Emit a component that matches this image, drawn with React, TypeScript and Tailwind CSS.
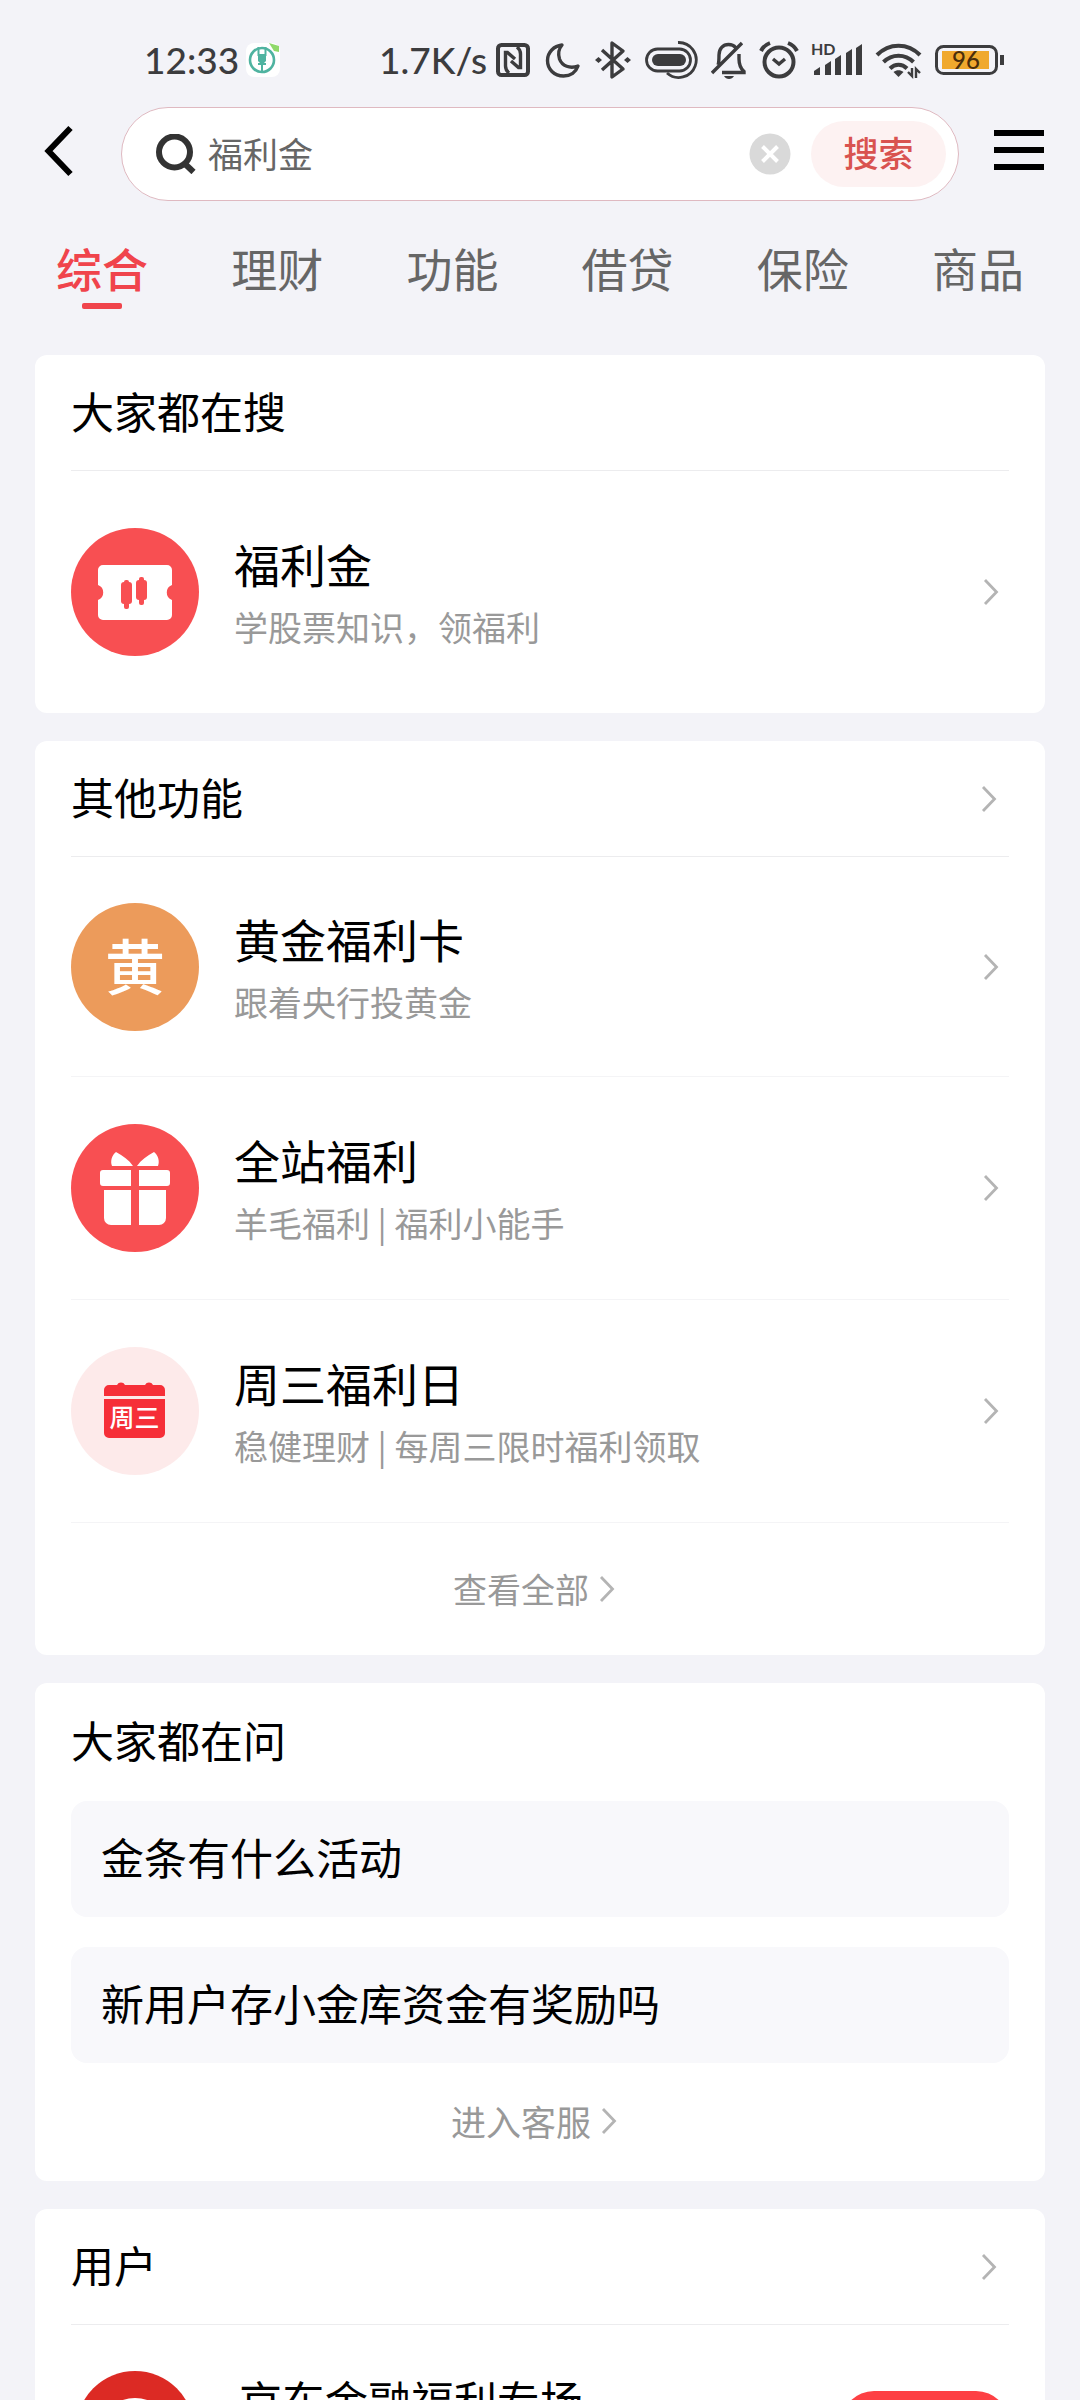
import React, { useState } from 'react';

const TABS = ['综合', '理财', '功能', '借贷', '保险', '商品'];

const QUESTIONS = ['金条有什么活动', '新用户存小金库资金有奖励吗'];

function ChevronRight() {
  return (
    <svg className="h-7 w-4 shrink-0" viewBox="0 0 16 28" fill="none" stroke="#b4b4b4" strokeWidth="2.8" aria-hidden="true">
      <path d="M2 2l11.500 12L2 26" />
    </svg>
  );
}

function StatusBar() {
  return (
    <div className="flex h-20 items-end justify-between pl-36 pr-[75px] font-['Lato',sans-serif] text-[37px] font-medium leading-10 text-[#3c3c3e]">
      <div className="flex items-center gap-[6px]">
        <span>12:33</span>
        <svg className="h-9 w-9" viewBox="0 0 36 36" fill="none" aria-hidden="true">
          <rect x="1" y="1" width="34" height="34" rx="8" fill="#fff" />
          <circle cx="17" cy="18" r="12" stroke="#4fb3a0" strokeWidth="2.600" />
          <path d="M13.500 5v8h7V5" stroke="#4fb3a0" strokeWidth="2" />
          <path d="M13 13h8v6l-2 2h2v2h-3v7h-2v-7h-3v-2h2l-2-2z" fill="#4fb3a0" />
          <path d="M24 1l10 3v6l-5-1z" fill="#8fd96a" />
        </svg>
      </div>
      <div className="flex items-center">
        <span>1.7K/s</span>
        {/* NFC */}
        <svg className="ml-2 h-9 w-9" viewBox="0 0 36 36" fill="none" stroke="#3c3c3e" aria-hidden="true">
          <rect x="3" y="3" width="30" height="30" rx="3.500" strokeWidth="4" />
          <path d="M14 31c-2.500-2-3.500-4-3.500-7V10.500h2L20 17M22 5c2.500 2 3.500 4 3.500 7v13.500h-2L16 19" strokeWidth="3.400" />
        </svg>
        {/* Do not disturb */}
        <svg className="ml-[14px] h-9 w-9" viewBox="0 0 36 36" fill="none" stroke="#3c3c3e" strokeWidth="3.400" strokeLinejoin="round" aria-hidden="true">
          <path d="M17 3C9 4 2.500 10 2.500 18.500S9 34 18.500 34c7 0 12.500-4 14.500-10-8 3-16 0-18.500-7C12.800 11.500 14 6.500 17 3z" />
        </svg>
        {/* Bluetooth */}
        <svg className="ml-[14px] h-10 w-9" viewBox="0 0 36 40" fill="none" stroke="#3c3c3e" strokeWidth="3.400" strokeLinejoin="round" aria-hidden="true">
          <path d="M7 10l21 19-11 8V3l11 8L7 30" />
          <path d="M0 20l3.500-3L7 20l-3.500 3zM29 20l3.500-3 3.500 3-3.500 3z" fill="#3c3c3e" stroke="none" />
        </svg>
        {/* Capsule */}
        <svg className="ml-[14px] h-10 w-[54px]" viewBox="0 0 54 40" fill="none" stroke="#3c3c3e" strokeWidth="2.800" aria-hidden="true">
          <rect x="1.500" y="9" width="44" height="22" rx="11" />
          <rect x="7" y="14" width="34" height="12" rx="6" fill="#3c3c3e" stroke="none" />
          <path d="M33 2.500A17.500 17.500 0 1 1 22 33" />
        </svg>
        {/* Muted bell */}
        <svg className="ml-3 h-10 w-9" viewBox="0 0 36 40" fill="none" stroke="#3c3c3e" strokeWidth="3.400" aria-hidden="true">
          <path d="M1 33L31 3M7 25c1-2 1-5 1-10C8 8.500 12 4.500 17.500 4.500c3 0 5.500 1 7 3M28 14v5c0 6 1 9 5 12.500v1H11" />
          <path d="M13 36h10c-1 2-3 3-5 3s-4-1-5-3z" fill="#3c3c3e" stroke="none" />
        </svg>
        {/* Alarm */}
        <svg className="ml-3 h-10 w-10" viewBox="0 0 40 40" fill="none" stroke="#3c3c3e" strokeWidth="4" aria-hidden="true">
          <circle cx="20" cy="22" r="14.500" />
          <path d="M14 19l6 5 6-5" strokeWidth="3.400" />
          <path d="M2 11c2-4 5-6.500 9-8M38 11c-2-4-5-6.500-9-8" />
        </svg>
        {/* Signal */}
        <svg className="ml-3 h-10 w-[52px]" viewBox="0 0 52 40" fill="#3c3c3e" aria-hidden="true">
          <text x="0" y="15" fontSize="16" fontWeight="700">HD</text>
          <path d="M3 35v-4l6-4v8zM14 35V25l6-4v14zM24 35V19l6-4v20zM35 35V13l6-4v26zM45 35V8l6-4v31z" />
        </svg>
        {/* Wi-Fi */}
        <svg className="ml-3 h-10 w-12" viewBox="0 0 48 40" fill="none" stroke="#3c3c3e" strokeWidth="4" aria-hidden="true">
          <path d="M2 15C14 2.500 33 2.500 45 15M8.500 22c8.500-8.500 21.500-8.500 30 0M15 28.500c5-5 12-5 17 0" />
          <path d="M23.500 37l-5-5c3-2.500 7-2.500 10 0z" fill="#3c3c3e" stroke="none" />
          <path d="M33 32l4 4V28M45 33l-4-4v9" strokeWidth="2.400" />
        </svg>
        {/* Battery */}
        <svg className="ml-3 h-10 w-[70px]" viewBox="0 0 70 40" fill="none" aria-hidden="true">
          <rect x="1.500" y="6.500" width="60" height="27" rx="7" stroke="#3c3c3e" strokeWidth="3" />
          <rect x="7" y="11" width="47" height="18" fill="#f0a92e" />
          <path d="M65 15h4v10h-4z" fill="#3c3c3e" />
          <text x="31" y="28.500" textAnchor="middle" fontSize="24" fill="#4a2e0c">96</text>
        </svg>
      </div>
    </div>
  );
}

function SearchHeader() {
  const [keyword, setKeyword] = useState('福利金');

  return (
    <header className="flex items-center pl-10 pr-9 pt-[27px]">
      <button type="button" aria-label="返回" className="pb-1">
        <svg className="h-[54px] w-9" viewBox="0 0 36 54" fill="none" stroke="#000" strokeWidth="6" aria-hidden="true">
          <path d="M30.500 3L8.500 26l22 23" />
        </svg>
      </button>
      <form
        role="search"
        onSubmit={(e) => e.preventDefault()}
        className="ml-[45px] flex h-[94px] min-w-0 flex-1 items-center rounded-full border border-[#dfb9c1] bg-white pl-[34px] pr-3"
      >
        <svg className="h-10 w-10 shrink-0" viewBox="0 0 40 40" fill="none" stroke="#333" strokeWidth="6" aria-hidden="true">
          <circle cx="18.500" cy="18" r="15.500" />
          <path d="M28 29l9.500 9" />
        </svg>
        <input
          type="text"
          aria-label="搜索内容"
          value={keyword}
          onChange={(e) => setKeyword(e.target.value)}
          className="ml-3 min-w-0 flex-1 bg-transparent pb-[2px] text-[35px] leading-[52px] text-[#666] outline-none"
        />
        <button type="button" aria-label="清空" onClick={() => setKeyword('')}>
          <svg className="h-[42px] w-[42px]" viewBox="0 0 42 42" aria-hidden="true">
            <circle cx="21" cy="21" r="20.500" fill="#d9d9d9" />
            <path d="M13.500 13.500l15 15M28.500 13.500l-15 15" stroke="#fff" strokeWidth="4" />
          </svg>
        </button>
        <button
          type="submit"
          className="ml-5 h-[66px] w-[135px] rounded-full bg-[#fdf2f2] pb-1 text-[35px] font-medium leading-[52px] text-[#d9534f]"
        >
          搜索
        </button>
      </form>
      <button type="button" aria-label="菜单" className="ml-[35px] flex w-[50px] flex-col gap-[11px] pb-2">
        <span className="h-[6px] bg-black" />
        <span className="h-[6px] bg-black" />
        <span className="h-[6px] bg-black" />
      </button>
    </header>
  );
}

function Tabs() {
  const [active, setActive] = useState(TABS[0]);

  return (
    <nav className="flex justify-between px-14 pb-[46px] pt-[33px]">
      {TABS.map((tab) => (
        <button
          key={tab}
          type="button"
          onClick={() => setActive(tab)}
          className={
            tab === active
              ? 'flex flex-col items-center gap-[3px] text-[46px] font-medium leading-[66px] text-[#f0444c]'
              : 'flex flex-col items-center gap-[3px] text-[46px] leading-[66px] text-[#666]'
          }
        >
          {tab}
          <span className={tab === active ? 'h-[6px] w-10 rounded-xs bg-[#f0444c]' : 'h-[6px] w-10'} />
        </button>
      ))}
    </nav>
  );
}

function Card({ title, arrow, divider = true, children }: {
  title: string;
  arrow?: boolean;
  divider?: boolean;
  children: React.ReactNode;
}) {
  return (
    <section className="rounded-xl bg-white px-9">
      <div className={divider ? 'flex h-[116px] items-center justify-between border-b border-[#ececee] pr-3' : 'flex h-[118px] items-center'}>
        <h2 className="pb-[6px] text-[43px] leading-[64px]">{title}</h2>
        {arrow && <ChevronRight />}
      </div>
      {children}
    </section>
  );
}

interface RowProps {
  icon: React.ReactNode;
  title: string;
  desc: string;
  className: string;
}

function Row({ icon, title, desc, className }: RowProps) {
  return (
    <li className={className}>
      <a href="#" className="flex h-full items-center pr-[10px]">
        {icon}
        <div className="ml-[35px] flex-1 pb-[2px]">
          <div className="text-[46px] leading-[72px]">{title}</div>
          <div className="text-[34px] leading-[56px] text-[#999]">{desc}</div>
        </div>
        <ChevronRight />
      </a>
    </li>
  );
}

function TicketIcon() {
  return (
    <svg className="h-32 w-32 shrink-0" viewBox="0 0 128 128" aria-hidden="true">
      <circle cx="64" cy="64" r="64" fill="#f84f52" />
      <path d="M32 37h64a5 5 0 0 1 5 5v15a8 8 0 0 0 0 15v15a5 5 0 0 1-5 5H32a5 5 0 0 1-5-5V72a8 8 0 0 0 0-15V42a5 5 0 0 1 5-5z" fill="#fff" />
      <g fill="#f84f52">
        <rect x="50" y="54" width="11" height="22" rx="3" />
        <rect x="53" y="52" width="5" height="29" rx="2" />
        <rect x="65" y="52" width="11" height="20" rx="3" />
        <rect x="68" y="49" width="5" height="28" rx="2" />
      </g>
    </svg>
  );
}

function GoldIcon() {
  return (
    <span className="flex h-32 w-32 shrink-0 items-center justify-center rounded-full bg-[#ec9b5b] pb-[6px] text-[60px] font-medium leading-[88px] text-white">
      黄
    </span>
  );
}

function GiftIcon() {
  return (
    <svg className="h-32 w-32 shrink-0" viewBox="0 0 128 128" aria-hidden="true">
      <circle cx="64" cy="64" r="64" fill="#f84f52" />
      <g fill="#fff">
        <path d="M45 28c7 4 13 8 17 14H41c-2-5 0-11 4-14zM83 28c-7 4-13 8-17 14h21c2-5 0-11-4-14z" />
        <path d="M32 46h28v16H32a3 3 0 0 1-3-3V49a3 3 0 0 1 3-3zM68 46h28a3 3 0 0 1 3 3v10a3 3 0 0 1-3 3H68z" />
        <path d="M33 66h27v35H40a7 7 0 0 1-7-7zM68 66h27v28a7 7 0 0 1-7 7H68z" />
      </g>
    </svg>
  );
}

function CalendarIcon() {
  return (
    <svg className="h-32 w-32 shrink-0" viewBox="0 0 128 128" aria-hidden="true">
      <circle cx="64" cy="64" r="64" fill="#fdeaea" />
      <path d="M33 49v-6a5 5 0 0 1 5-5h8a4.500 4.500 0 0 1 8 0h20a4.500 4.500 0 0 1 8 0h7a5 5 0 0 1 5 5v6zM33 52h61v34a5 5 0 0 1-5 5H38a5 5 0 0 1-5-5z" fill="#f62f38" />
      <text x="63.500" y="80" textAnchor="middle" fontSize="25" fontWeight="500" fill="#fff">周三</text>
    </svg>
  );
}

export default function App() {
  return (
    <div className="h-screen overflow-hidden bg-[#f3f3f8] font-['Noto_Sans_CJK_SC',sans-serif] text-black">
      <StatusBar />
      <SearchHeader />
      <Tabs />

      <main className="flex flex-col gap-7 px-[35px]">
        <Card title="大家都在搜">
          <ul>
            <Row className="h-[242px]" icon={<TicketIcon />} title="福利金" desc="学股票知识，领福利" />
          </ul>
        </Card>

        <Card title="其他功能" arrow>
          <ul>
            <Row className="h-[220px] border-b border-[#f4f4f6]" icon={<GoldIcon />} title="黄金福利卡" desc="跟着央行投黄金" />
            <Row className="h-[223px] border-b border-[#f4f4f6]" icon={<GiftIcon />} title="全站福利" desc="羊毛福利 | 福利小能手" />
            <Row className="h-[223px] border-b border-[#f4f4f6]" icon={<CalendarIcon />} title="周三福利日" desc="稳健理财 | 每周三限时福利领取" />
          </ul>
          <a href="#" className="flex h-[132px] items-center justify-center gap-[10px] pr-3 text-[34px] leading-[50px] text-[#999]">
            查看全部
            <ChevronRight />
          </a>
        </Card>

        <Card title="大家都在问" divider={false}>
          <div className="flex flex-col gap-[30px]">
            {QUESTIONS.map((question) => (
              <a key={question} href="#" className="flex h-[116px] items-center rounded-2xl bg-[#f8f8fb] px-[30px] pb-[6px] text-[43px] leading-[64px]">
                {question}
              </a>
            ))}
          </div>
          <a href="#" className="flex h-[118px] items-center justify-center gap-[10px] pb-[2px] pr-3 text-[35px] leading-[50px] text-[#999]">
            进入客服
            <ChevronRight />
          </a>
        </Card>

        <Card title="用户" arrow>
          <div className="flex items-start pb-12 pt-11">
            <svg className="ml-1 h-[120px] w-[120px] shrink-0" viewBox="0 0 120 120" aria-hidden="true">
              <circle cx="60" cy="61" r="59" fill="#dc2a24" />
              <ellipse cx="60" cy="59" rx="34" ry="30" fill="#fff" />
            </svg>
            <div className="ml-11 flex-1 text-[43px] leading-[60px]">京东金融福利专场</div>
            <button type="button" aria-label="关注" className="mt-[22px] h-[66px] w-[168px] rounded-full bg-[#fd4044]" />
          </div>
        </Card>
      </main>
    </div>
  );
}
